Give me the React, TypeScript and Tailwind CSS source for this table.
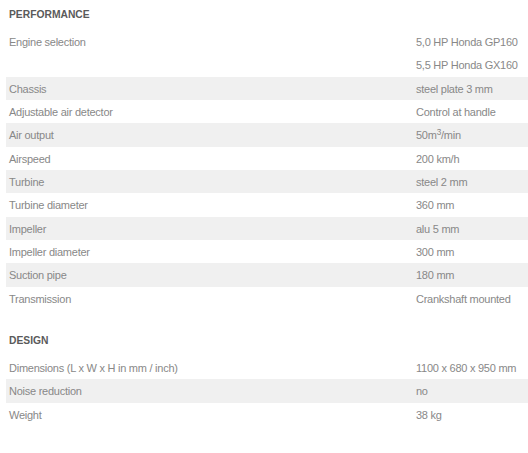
import React from 'react'

type Spec = { label: string; values: React.ReactNode[] }

const performance: Spec[] = [
  { label: 'Engine selection', values: ['5,0 HP Honda GP160', '5,5 HP Honda GX160'] },
  { label: 'Chassis', values: ['steel plate 3 mm'] },
  { label: 'Adjustable air detector', values: ['Control at handle'] },
  {
    label: 'Air output',
    values: [
      <span>
        50m<sup>3</sup>/min
      </span>,
    ],
  },
  { label: 'Airspeed', values: ['200 km/h'] },
  { label: 'Turbine', values: ['steel 2 mm'] },
  { label: 'Turbine diameter', values: ['360 mm'] },
  { label: 'Impeller', values: ['alu 5 mm'] },
  { label: 'Impeller diameter', values: ['300 mm'] },
  { label: 'Suction pipe', values: ['180 mm'] },
  { label: 'Transmission', values: ['Crankshaft mounted'] },
]

const design: Spec[] = [
  { label: 'Dimensions (L x W x H in mm / inch)', values: ['1100 x 680 x 950 mm'] },
  { label: 'Noise reduction', values: ['no'] },
  { label: 'Weight', values: ['38 kg'] },
]

function SpecTable({ rows }: { rows: Spec[] }) {
  return (
    <div className="flex flex-col">
      {rows.map((row, i) => (
        <div
          key={row.label}
          className={`grid grid-cols-[407px_1fr] pl-[3px] ${i % 2 === 1 ? 'bg-[#f0f0f0]' : ''}`}
        >
          <div className="h-[23.33px] pt-[1px] flex items-center">{row.label}</div>
          <div className="flex flex-col">
            {row.values.map((v, j) => (
              <div key={j} className="h-[23.33px] pt-[1px] flex items-center whitespace-nowrap">
                {v}
              </div>
            ))}
          </div>
        </div>
      ))}
    </div>
  )
}

export default function App() {
  return (
    <div
      className="w-[528px] h-[453px] bg-white pl-[6px] text-[11px] tracking-[-0.25px] text-[#888888]"
      style={{ fontFamily: '"Liberation Sans", Arial, sans-serif' }}
    >
      <h2 className="pl-[3px] pt-[8px] pb-[9px] leading-[13px] text-[10.3px] tracking-normal font-bold text-[#5a5a5a]">PERFORMANCE</h2>
      <SpecTable rows={performance} />
      <h2 className="pl-[3px] mt-[24px] pb-[9px] leading-[13px] text-[10.3px] tracking-normal font-bold text-[#5a5a5a]">DESIGN</h2>
      <SpecTable rows={design} />
    </div>
  )
}
